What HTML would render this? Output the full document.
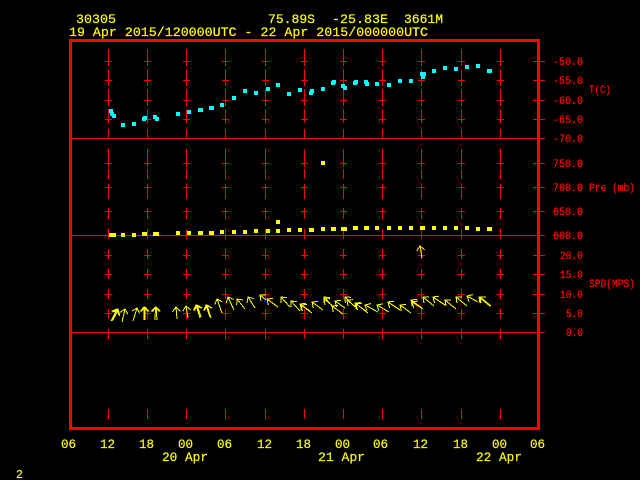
<!DOCTYPE html>
<html lang="en">
<head>
<meta charset="utf-8">
<title>30305</title>
<style>
html,body{margin:0;padding:0;background:#000;width:640px;height:480px;overflow:hidden}
svg{display:block}
text{font-family:"Liberation Mono",monospace;white-space:pre}
.y text{fill:#ffff00;stroke:#ffff00;stroke-width:.2px;font-size:13.33px}
.r text{fill:#ff0000;stroke:#ff0000;stroke-width:.25px;font-size:11px}
</style>
</head>
<body>
<svg width="640" height="480" viewBox="0 0 640 480" xmlns="http://www.w3.org/2000/svg">
<defs>
<g id="col" fill="none" stroke="#f00" stroke-width="1" shape-rendering="crispEdges">
<path d="M.5 49V66M.5 69V86M.5 89V106M.5 109V123M.5 129V139M.5 149V167M.5 169V179M.5 184V199M.5 208V219M.5 229V239M.5 249V259M.5 269V279M.5 289V299M.5 309V319M.5 329V339M.5 409V419"/>
<path d="M-3 61.5H4M-3 80.5H4M-3 100.5H4M-3 119.5H4M-3 163.5H4M-3 187.5H4M-3 211.5H4M-3 255.5H4M-3 274.5H4M-3 294.5H4M-3 313.5H4"/>
</g>
<marker id="h" markerUnits="userSpaceOnUse" markerWidth="14" markerHeight="14" refX="7" refY="7" orient="auto" viewBox="0 0 14 14" overflow="visible">
<path d="M2.5 3L7 7L2.5 11" fill="none" stroke="#ff0" stroke-width="1" shape-rendering="crispEdges"/>
</marker>
</defs>
<rect width="640" height="480" fill="#000"/>
<use href="#col" x="108"/><use href="#col" x="147"/><use href="#col" x="186"/><use href="#col" x="225"/><use href="#col" x="265"/><use href="#col" x="304"/><use href="#col" x="343"/><use href="#col" x="382"/><use href="#col" x="421"/><use href="#col" x="461"/><use href="#col" x="500"/>
<path fill="none" stroke="#f00" stroke-width="1" shape-rendering="crispEdges" d="M72 138.5H545M72 235.5H545M72 332.5H545M533 61.5H545M533 80.5H545M533 100.5H545M533 119.5H545M533 163.5H545M533 187.5H545M533 211.5H545M533 255.5H545M533 274.5H545M533 294.5H545M533 313.5H545"/>
<rect x="70.5" y="40.5" width="468" height="388" fill="none" stroke="#f00" stroke-width="3" shape-rendering="crispEdges"/>

<path fill="#0ff" shape-rendering="crispEdges" d="M109 109h4v4h-4zM110 112h4v4h-4zM112 114h4v4h-4zM121 123h4v4h-4zM132 122h4v4h-4zM142 117h4v4h-4zM143 116h4v4h-4zM153 115h4v4h-4zM155 117h4v4h-4zM176 112h4v4h-4zM187 110h4v4h-4zM198 108h4v4h-4zM199 108h4v4h-4zM209 106h4v4h-4zM210 106h4v4h-4zM220 103h4v4h-4zM232 96h4v4h-4zM243 89h4v4h-4zM254 91h4v4h-4zM266 87h4v4h-4zM276 83h4v4h-4zM287 92h4v4h-4zM298 88h4v4h-4zM309 91h4v4h-4zM310 89h4v4h-4zM321 87h4v4h-4zM331 81h4v4h-4zM332 80h4v4h-4zM341 84h4v4h-4zM343 86h4v4h-4zM353 81h4v4h-4zM354 80h4v4h-4zM364 80h4v4h-4zM365 82h4v4h-4zM375 82h4v4h-4zM387 83h4v4h-4zM398 79h4v4h-4zM409 79h4v4h-4zM420 72h4v4h-4zM422 72h4v4h-4zM421 75h4v4h-4zM432 69h4v4h-4zM443 66h4v4h-4zM454 67h4v4h-4zM465 65h4v4h-4zM476 64h4v4h-4zM487 69h4v4h-4zM488 69h4v4h-4z"/>

<path fill="#ff0" shape-rendering="crispEdges" d="M109 233h4v4h-4zM112 233h4v4h-4zM121 233h4v4h-4zM132 233h4v4h-4zM142 232h4v4h-4zM143 232h4v4h-4zM153 232h4v4h-4zM155 232h4v4h-4zM176 231h4v4h-4zM187 231h4v4h-4zM198 231h4v4h-4zM199 231h4v4h-4zM209 231h4v4h-4zM210 231h4v4h-4zM220 230h4v4h-4zM232 230h4v4h-4zM243 230h4v4h-4zM254 229h4v4h-4zM266 229h4v4h-4zM276 229h4v4h-4zM276 220h4v4h-4zM287 228h4v4h-4zM298 228h4v4h-4zM309 228h4v4h-4zM310 228h4v4h-4zM321 161h4v4h-4zM321 227h4v4h-4zM331 227h4v4h-4zM332 227h4v4h-4zM341 227h4v4h-4zM343 227h4v4h-4zM353 226h4v4h-4zM354 226h4v4h-4zM364 226h4v4h-4zM365 226h4v4h-4zM375 226h4v4h-4zM387 226h4v4h-4zM398 226h4v4h-4zM409 226h4v4h-4zM420 226h4v4h-4zM421 226h4v4h-4zM432 226h4v4h-4zM443 226h4v4h-4zM454 226h4v4h-4zM465 226h4v4h-4zM476 227h4v4h-4zM487 227h4v4h-4zM488 227h4v4h-4z"/>

<g fill="none" stroke="#ff0" stroke-width="1" shape-rendering="crispEdges" marker-end="url(#h)">
<path d="M111 321L117 309"/><path d="M112 321L118 309"/><path d="M113 320L118 310"/>
<path d="M122 322L125 309"/><path d="M133 321L137 308"/><path d="M144 320L144 307"/>
<path d="M145 320L145 307"/><path d="M155 320L155.5 307"/><path d="M157 320L156 307"/>
<path d="M177 319L176 307"/><path d="M188 318L186 306"/><path d="M200 318L196 305"/>
<path d="M201 317L197 305"/><path d="M211 318L207 305"/><path d="M210 317L206 305"/>
<path d="M222 313L217 299"/><path d="M234 310L228 297"/><path d="M245 309L237 299"/>
<path d="M255 308L248 297"/><path d="M266 300L260 295"/><path d="M278 307L267 299"/>
<path d="M290 307L281 297"/><path d="M300 311L291 301"/><path d="M312 313L301 305"/>
<path d="M310 311L300 304"/><path d="M323 310L312 302"/><path d="M333 307L324 297"/>
<path d="M334 307L324 299"/><path d="M343 314L332 306"/><path d="M345 308L335 301"/>
<path d="M355 307L345 297"/><path d="M357 308L347 300"/><path d="M368 313L355 303"/>
<path d="M366 311L356 304"/><path d="M378 312L365 305"/><path d="M389 312L377 305"/>
<path d="M400 310L388 302"/><path d="M411 313L400 305"/><path d="M422 308L411 300"/>
<path d="M423 309L412 302"/><path d="M434 306L423 297"/><path d="M445 305L433 297"/>
<path d="M456 309L445 300"/><path d="M467 306L456 297"/><path d="M478 302L467 296"/>
<path d="M490 306L479 297"/><path d="M491 306L480 297"/><path d="M422 258L420 246"/>
</g>

<g class="y">
<text x="76" y="23" textLength="40" lengthAdjust="spacingAndGlyphs">30305</text>
<text x="268" y="23" textLength="47" lengthAdjust="spacingAndGlyphs">75.89S</text>
<text x="332" y="23" textLength="56" lengthAdjust="spacingAndGlyphs">-25.83E</text>
<text x="404" y="23" textLength="39" lengthAdjust="spacingAndGlyphs">3661M</text>
<text x="69" y="36" textLength="359" lengthAdjust="spacingAndGlyphs">19 Apr 2015/120000UTC - 22 Apr 2015/000000UTC</text>
<text x="61" y="448" textLength="15" lengthAdjust="spacingAndGlyphs">06</text>
<text x="100" y="448" textLength="15" lengthAdjust="spacingAndGlyphs">12</text>
<text x="139" y="448" textLength="15" lengthAdjust="spacingAndGlyphs">18</text>
<text x="178" y="448" textLength="15" lengthAdjust="spacingAndGlyphs">00</text>
<text x="217" y="448" textLength="15" lengthAdjust="spacingAndGlyphs">06</text>
<text x="257" y="448" textLength="15" lengthAdjust="spacingAndGlyphs">12</text>
<text x="296" y="448" textLength="15" lengthAdjust="spacingAndGlyphs">18</text>
<text x="335" y="448" textLength="15" lengthAdjust="spacingAndGlyphs">00</text>
<text x="373" y="448" textLength="15" lengthAdjust="spacingAndGlyphs">06</text>
<text x="413" y="448" textLength="15" lengthAdjust="spacingAndGlyphs">12</text>
<text x="453" y="448" textLength="15" lengthAdjust="spacingAndGlyphs">18</text>
<text x="492" y="448" textLength="15" lengthAdjust="spacingAndGlyphs">00</text>
<text x="530" y="448" textLength="15" lengthAdjust="spacingAndGlyphs">06</text>
<text x="162" y="461" textLength="46" lengthAdjust="spacingAndGlyphs">20 Apr</text>
<text x="318" y="461" textLength="47" lengthAdjust="spacingAndGlyphs">21 Apr</text>
<text x="476" y="461" textLength="46" lengthAdjust="spacingAndGlyphs">22 Apr</text>
<text x="16" y="478" style="font-size:12px" textLength="7" lengthAdjust="spacingAndGlyphs">2</text>
</g>

<g class="r">
<text x="553" y="65" textLength="30" lengthAdjust="spacingAndGlyphs">-50.0</text>
<text x="553" y="84" textLength="30" lengthAdjust="spacingAndGlyphs">-55.0</text>
<text x="553" y="104" textLength="30" lengthAdjust="spacingAndGlyphs">-60.0</text>
<text x="553" y="123" textLength="30" lengthAdjust="spacingAndGlyphs">-65.0</text>
<text x="553" y="142" textLength="30" lengthAdjust="spacingAndGlyphs">-70.0</text>
<text x="553" y="167" textLength="30" lengthAdjust="spacingAndGlyphs">750.0</text>
<text x="553" y="191" textLength="30" lengthAdjust="spacingAndGlyphs">700.0</text>
<text x="553" y="215" textLength="30" lengthAdjust="spacingAndGlyphs">650.0</text>
<text x="553" y="239" textLength="30" lengthAdjust="spacingAndGlyphs">600.0</text>
<text x="560" y="259" textLength="23" lengthAdjust="spacingAndGlyphs">20.0</text>
<text x="560" y="278" textLength="23" lengthAdjust="spacingAndGlyphs">15.0</text>
<text x="560" y="298" textLength="23" lengthAdjust="spacingAndGlyphs">10.0</text>
<text x="566" y="317" textLength="17" lengthAdjust="spacingAndGlyphs">5.0</text>
<text x="566" y="336" textLength="17" lengthAdjust="spacingAndGlyphs">0.0</text>
<text x="589" y="93" textLength="22" lengthAdjust="spacingAndGlyphs">T(C)</text>
<text x="589" y="191" textLength="46" lengthAdjust="spacingAndGlyphs">Pre (mb)</text>
<text x="589" y="287" textLength="46" lengthAdjust="spacingAndGlyphs">SPD(MPS)</text>
</g>
</svg>
</body>
</html>
